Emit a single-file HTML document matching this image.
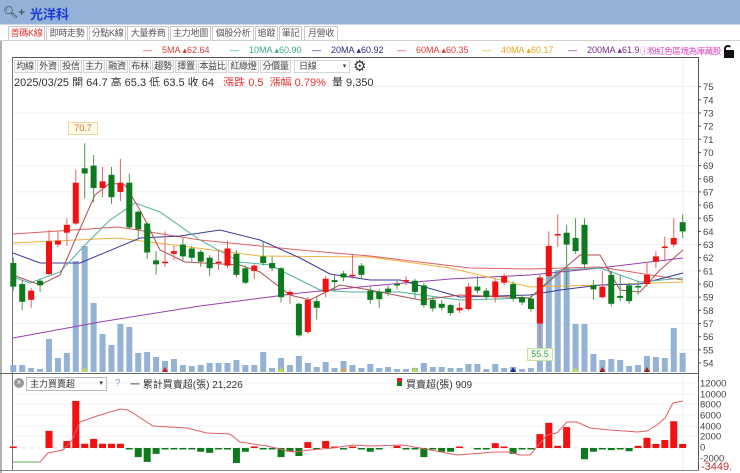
<!DOCTYPE html>
<html><head><meta charset="utf-8"><style>
*{margin:0;padding:0;box-sizing:border-box}
body{width:740px;height:473px;overflow:hidden;background:#fff;font-family:"Liberation Sans","Noto Sans CJK TC",sans-serif;position:relative}
.a{position:absolute;white-space:nowrap}
#top{left:0;top:0;width:740px;height:24px;background:#94b2d7}
.tab{position:absolute;top:26px;height:15px;border:1px solid #c8c8c8;font-size:9px;color:#555;line-height:13px;text-align:center;background:#fff;white-space:nowrap;overflow:hidden;letter-spacing:-0.3px}
.tb{position:absolute;top:60px;height:13px;border:1px solid #d4d4d4;font-size:9px;color:#444;line-height:11px;text-align:center;background:#f7f7f7;white-space:nowrap;overflow:hidden;letter-spacing:-0.3px}
.leg{position:absolute;top:45px;font-size:9px;white-space:nowrap}
</style></head><body>
<div class="a" id="top"></div>
<div class="a" style="left:3px;top:5px;font-size:12px;color:#333">🔍︎+</div>
<div class="a" style="left:30px;top:4px;font-size:13px;color:#1a3bd6;font-weight:bold">光洋科</div>
<div class="a" style="left:0;top:24px;width:740px;height:1px;background:#c9d6e6"></div>
<div class="tab" style="left:8px;width:37px;color:#e03030;border-bottom-color:#fff">善碼K線</div>
<div class="tab" style="left:46px;width:42px">即時走勢</div>
<div class="tab" style="left:89px;width:37px">分點K線</div>
<div class="tab" style="left:127px;width:42px">大量券商</div>
<div class="tab" style="left:170px;width:41px">主力地圖</div>
<div class="tab" style="left:212px;width:42px">個股分析</div>
<div class="tab" style="left:255px;width:23px">追蹤</div>
<div class="tab" style="left:279px;width:23px">筆記</div>
<div class="tab" style="left:304px;width:34px">月營收</div>
<div class="a" style="left:0;top:40px;width:740px;height:1px;background:#d0d0d0"></div>
<div class="a" style="left:0;top:41px;width:2px;height:432px;background:#b0b0b0"></div>
<div class="leg" style="left:143px;color:#e03a3a">—&nbsp;&nbsp;&nbsp;&nbsp;5MA ▴62.64</div>
<div class="leg" style="left:230px;color:#3aa88a">—&nbsp;&nbsp;&nbsp;&nbsp;10MA ▴60.90</div>
<div class="leg" style="left:312px;color:#2a2a8a">—&nbsp;&nbsp;&nbsp;&nbsp;20MA ▴60.92</div>
<div class="leg" style="left:397px;color:#e03a3a">—&nbsp;&nbsp;&nbsp;&nbsp;60MA ▴60.35</div>
<div class="leg" style="left:482px;color:#e8a820">—&nbsp;&nbsp;&nbsp;&nbsp;40MA ▴60.17</div>
<div class="leg" style="left:568px;color:#7a2a8a;width:72px;overflow:hidden">—&nbsp;&nbsp;&nbsp;&nbsp;200MA ▴61.99</div>
<div class="leg" style="left:640px;top:45px;color:#e040c0;font-size:8.5px;letter-spacing:-0.4px">ⓘ粉紅色區塊為庫藏股</div>
<div class="a" style="left:724px;top:45px;width:8px;height:6px;border:2px solid #111;border-bottom:none;border-radius:4px 4px 0 0;border-right-color:transparent"></div>
<div class="a" style="left:724px;top:50px;width:10px;height:8px;background:#111"></div>
<div class="a" style="left:12px;top:57px;width:687px;height:1px;background:#555"></div>
<div class="a" style="left:698px;top:57px;width:1px;height:414px;background:#555"></div>
<div class="a" style="left:12px;top:57px;width:1px;height:414px;background:#777"></div>
<div class="tb" style="left:14px;width:22px">均線</div>
<div class="tb" style="left:37px;width:22px">外資</div>
<div class="tb" style="left:60px;width:22px">投信</div>
<div class="tb" style="left:83px;width:22px">主力</div>
<div class="tb" style="left:106px;width:22px">融資</div>
<div class="tb" style="left:129px;width:22px">布林</div>
<div class="tb" style="left:152px;width:22px">趨勢</div>
<div class="tb" style="left:175px;width:22px">擇置</div>
<div class="tb" style="left:198px;width:29px">本益比</div>
<div class="tb" style="left:228px;width:31px">紅綠燈</div>
<div class="tb" style="left:260px;width:31px">分價量</div>
<div class="tb" style="left:294px;width:56px;background:#fff;text-align:left;padding-left:4px">日線<span style="float:right;margin-right:3px;font-size:7px">▾</span></div>
<div class="a" style="left:353px;top:57px;font-size:15px;color:#333">⚙</div>
<div class="a" style="left:14px;top:74px;font-size:11px;color:#333">2025/03/25 開 64.7 高 65.3 低 63.5 收 64 &nbsp;&nbsp;<span style="color:#e83030">漲跌 0.5 &nbsp;漲幅 0.79%</span> &nbsp;量 9,350</div>
<svg id="s" class="a" style="left:0;top:0" width="740" height="473" xmlns="http://www.w3.org/2000/svg"></svg>
<div class="a" style="left:68px;top:122px;width:30px;height:13px;border:1px solid #e8d8a0;background:#fffbe8;font-size:9px;color:#e07030;text-align:center;line-height:11px">70.7</div>
<div class="a" style="left:527px;top:348px;width:26px;height:13px;border:1px solid #c8e0a0;background:#f4fbe8;font-size:9px;color:#4a9a6a;text-align:center;line-height:11px">55.5</div>
<div class="a" style="left:0;top:373px;width:699px;height:1px;background:#666"></div>
<div class="a" style="left:0;top:470px;width:699px;height:1px;background:#888"></div>
<div class="a" style="left:14px;top:378px;width:10px;height:10px;border-radius:5px;background:#999;color:#fff;font-size:8px;line-height:10px;text-align:center">×</div>
<div class="a" style="left:26px;top:377px;width:81px;height:14px;border:1px solid #bbb;font-size:9px;line-height:12px;padding-left:3px;color:#333">主力買賣超<span style="float:right;margin-right:3px;font-size:7px">▾</span></div>
<div class="a" style="left:115px;top:378px;font-size:10px;color:#7aa0d0">?</div>
<div class="a" style="left:130px;top:376px;font-size:10px;color:#333">一 累計買賣超(張) 21,226</div>
<div class="a" style="left:397px;top:378px;width:5px;height:4px;background:#e02020"></div>
<div class="a" style="left:397px;top:382px;width:5px;height:4px;background:#107a20"></div>
<div class="a" style="left:406px;top:376px;font-size:10px;color:#333">買賣超(張) 909</div>
<div class="a" style="left:701px;top:461px;font-size:11px;color:#c03030">-3449.</div>
<script>
const s=document.getElementById('s');let h='';
const Y=p=>363-(p-54)*13.16, X=i=>13.3+i*8.925;
for(let p=55;p<=75;p+=2){h+=`<line x1="13" x2="697" y1="${Y(p)}" y2="${Y(p)}" stroke="#f0f0f0"/>`}
h+=`<line x1="683" x2="683" y1="58" y2="470" stroke="#eee"/>`;
for(let p=54;p<=75;p++){const y=Y(p);h+=`<line x1="698" x2="701" y1="${y}" y2="${y}" stroke="#555"/><text x="703" y="${y+3.5}" font-size="9.5" fill="#444">${p}</text>`}
const V={0:365,1:365,2:368,3:369,4:339,5:358,6:353,7:261,8:246,9:303,10:334,11:345,12:324,13:327,14:353,15:352,16:357,17:361,18:359,19:365,20:366,21:365,22:363,23:363,24:363,25:360,26:365,27:365,28:352,29:368,30:358,31:365,32:356,33:363,34:367,35:362,36:368,37:361,38:365,39:368,40:364,41:368,42:367,43:369,44:369,45:368,46:363,47:367,48:367,49:368,50:368,51:364,52:364,53:369,54:364,55:368,56:367,57:369,58:368,59:290,60:275,61:270,62:267,63:324,64:324,65:354,66:360,67:359,68:360,69:366,70:365,71:356,72:357,73:358,74:328,75:353};
for(const i in V){h+=`<rect x="${X(i)-3}" y="${V[i]}" width="6" height="${372-V[i]}" fill="#93b2d6"/>`}
const mk=[[8,'#b8e040'],[17,'#d02020'],[30,'#b8e040'],[37,'#e0a040'],[45,'#b8e040'],[56,'#2030a0'],[63,'#b8e040'],[66,'#a02020'],[71,'#a02020']];
for(const[i,c]of mk){const x=X(i);h+=`<polygon points="${x-3},372 ${x+3},372 ${x},367" fill="${c}"/>`}
const pl=(pts,c)=>{h+=`<polyline fill="none" stroke="${c}" stroke-width="1" points="${pts}"/>`};
pl("13,338 100,322 200,306 300,293 370,286 450,279 530,275 600,268 683,258","#9a40b0");
pl("13,234 118,227 200,240 300,250 370,256 470,268 530,269 600,267 683,280","#e06060");
pl("13,243 118,238 260,256 370,257 450,268 530,287 600,285 683,282","#f0b040");
pl("13,253 40,263 80,263 140,238 180,236 220,230 260,240 300,258 330,274 370,280 400,280 460,297 530,295 560,290 600,285 640,284 683,273","#3a3a9a");
pl("13,277 30,283 60,272 85,245 110,220 135,203 160,212 200,240 240,262 270,265 320,290 350,292 400,292 460,300 530,298 560,270 600,268 620,275 640,282 683,278","#50b0a0");
pl("13,275 40,285 60,275 75,240 95,195 110,183 125,185 140,210 160,250 185,262 240,265 260,272 290,295 310,300 340,285 370,290 420,300 460,295 530,298 545,285 580,255 600,255 620,290 640,292 660,270 683,250","#b05050");
const D=[[61.6,59.8,62,59.5],[60,58.65,60.3,58],[58.8,59.5,59.7,58.2],[60.25,59.9,60.4,59.4],[60.75,63.25,64.1,60.7],[63,63.3,64,62.8],[63.9,64.5,65,62.9],[64.6,67.7,68.7,64.5],[68.8,68.4,70.7,66.5],[69,67.3,69.8,66.2],[67.3,67.8,68.9,66.6],[68.3,66.6,68.9,66.1],[67,67.7,69.5,66.3],[67.7,64.3,68.4,64.2],[65.5,64.15,65.6,63.5],[64.6,62.4,64.7,61.9],[61.8,61.5,62.5,60.7],[61.6,61.7,64,61.3],[62.3,62.5,62.9,61.8],[63,62.1,63.5,61.8],[62.7,62,62.9,61.7],[62.45,61.7,62.6,61.3],[62,61.2,62.2,60.6],[61.6,61.7,62.6,61.1],[61.4,62.7,63.3,61.2],[62.3,60.7,62.6,60.5],[61.2,60.1,61.4,60],[61,61.4,61.5,60.4],[62.1,61.6,63.2,61.4],[61.6,61.2,62.1,61],[61.2,59,61.3,58.6],[59.2,59.4,59.6,58.5],[58.5,56.1,58.6,56],[56.35,58.8,59,56.2],[58.7,58.2,59,57.3],[59.4,60.4,60.6,59],[60.3,60.15,60.7,59.4],[60.8,60.5,61,60.2],[60.6,60.7,62.2,60.4],[61.4,60.7,61.6,60.4],[59.5,58.8,59.8,58.5],[59.4,58.85,59.6,58.2],[59.65,59.35,59.9,59.1],[60,59.9,60.3,59.6],[60.2,60.3,60.6,59.9],[60.25,59.4,60.4,58.9],[59.9,58.4,60.1,58.2],[58.8,58.15,59,57.9],[58.5,58.2,58.8,58],[58.4,57.8,58.5,57.6],[58,58.2,58.6,57.8],[58.1,59.8,60.1,58],[59.8,59.5,60.6,59.3],[59.5,59,59.7,58.8],[59,60.2,60.4,58.6],[60.1,60.6,60.8,59.9],[60,58.9,60.2,58.7],[59,58.6,59.2,58.4],[58.9,58.1,59.1,57.9],[57,60.5,60.7,55.3],[60.6,62.9,64,60.4],[63.7,63.8,65.3,62.8],[63.9,63,64.5,59.5],[63.5,62.5,65,62.3],[64.5,61.5,65,61.2],[59.9,59.6,60.3,58.8],[59,59.8,61,58.9],[60.7,58.5,61,58.3],[59.1,58.95,60.7,58.7],[59.9,58.7,60.1,58.5],[59.85,59.75,60.2,59.2],[60,60.7,61.7,59.8],[61.7,62.1,62.5,61.2],[62.8,62.85,63.6,61.7],[63,63.5,65,62.8],[64.7,64,65.3,63.5]];
D.forEach((d,i)=>{const[o,c,hi,lo]=d,x=X(i),up=c>=o,col=up?'#f21010':'#0d7a1e',wc=up?'#e86060':'#4a9a4a';
h+=`<line x1="${x}" x2="${x}" y1="${Y(hi)}" y2="${Y(lo)}" stroke="${wc}" stroke-width="1"/>`;
const t=Y(Math.max(o,c)),b=Y(Math.min(o,c));h+=`<rect x="${x-3}" y="${t}" width="6" height="${Math.max(b-t,1.5)}" fill="${col}"/>`});
const Z=448,k=10.7/2000;
[[12000,383],[10000,394],[8000,404],[6000,415],[4000,426],[2000,436],[0,447],[-2000,458]].forEach(([v,y])=>{h+=`<text x="700" y="${y+3.5}" font-size="9.5" fill="#444">${v}</text>`;if(v>0)h+=`<line x1="13" x2="697" y1="${y}" y2="${y}" stroke="#f2f2f2"/>`});
h+=`<line x1="13" x2="683" y1="${Z}" y2="${Z}" stroke="#ddd" stroke-dasharray="4,4"/>`;
const B={0:0,4:3200,6:1300,7:8800,8:800,9:1700,10:800,11:800,12:800,13:-200,14:-1700,15:-2600,16:-1100,17:-200,18:-200,19:-200,20:-200,21:-700,22:-900,23:-200,24:-200,25:-2800,26:-700,27:300,28:-200,29:-200,30:-1700,31:-700,32:-1500,33:1100,34:-200,35:1300,36:200,37:-200,38:200,39:-200,40:-700,41:-200,43:400,44:-200,45:-200,46:-1700,47:-200,48:-700,49:-700,50:200,52:-200,53:-200,54:900,55:200,56:-1100,57:-200,58:-200,59:2600,60:4700,61:400,62:3900,64:-2100,65:-700,66:-200,67:-400,68:-200,69:-600,70:400,71:1900,72:750,73:1500,74:5000,75:750};
for(const i in B){const v=B[i],hh=Math.max(Math.abs(v)*k,1.5),x=X(i);h+=`<rect x="${x-3.5}" y="${v>=0?Z-hh:Z}" width="7" height="${hh}" fill="${v>=0?'#f21010':'#0d7a1e'}"/>`}
h+=`<polyline fill="none" stroke="#5ab05a" points="13,462 38,462"/>`;
pl("38,462 40,462 48,453 63,450 72,440 80,422 97,416 120,409 128,410 153,426 187,428 207,433 230,434 240,442 267,446 293,452 310,450 333,448 353,445 370,446 403,445 420,448 457,455 483,453 493,452 510,452 520,455 530,455 547,435 557,433 567,422 577,422 590,428 610,430 637,432 647,431 657,425 665,418 673,403 683,401","#e06060");
s.innerHTML=h;
</script>
</body></html>
